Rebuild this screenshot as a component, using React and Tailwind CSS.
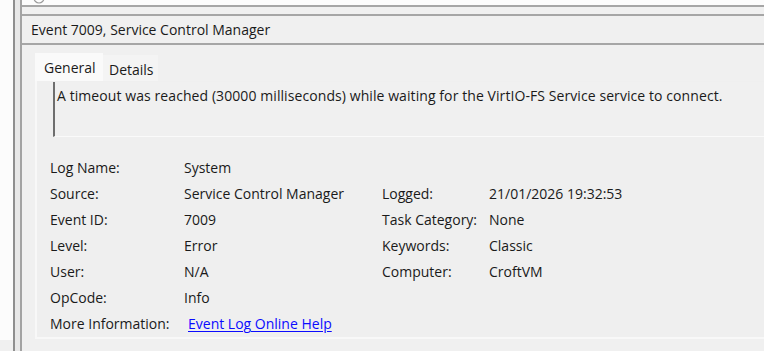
const rows = [
  ["Log Name:", "System", "", ""],
  ["Source:", "Service Control Manager", "Logged:", "21/01/2026 19:32:53"],
  ["Event ID:", "7009", "Task Category:", "None"],
  ["Level:", "Error", "Keywords:", "Classic"],
  ["User:", "N/A", "Computer:", "CroftVM"],
  ["OpCode:", "Info", "", ""],
];

function Cell({ children }) {
  return <div className="h-[26px] leading-[26px] whitespace-nowrap">{children}</div>;
}

export default function App() {
  return (
    <div className="w-[764px] h-[351px] overflow-hidden flex bg-[#f0f0f0] text-[14px] text-[#1a1a1a] font-['Open_Sans',sans-serif]">
      {/* left edge of the list pane */}
      <div className="w-[13px] flex flex-col">
        <div className="flex-1 bg-[#fcfcfc]" />
        <div className="h-[11px] bg-[#f0f0f0]" />
      </div>
      <div className="w-[2px] bg-[#8f8f8f]" />
      <div className="w-[5px] bg-[#e8e8e8]" />
      <div className="w-[2px] bg-[#a3a3a3]" />

      <div className="flex-1 min-w-0 flex flex-col">
        {/* bottom of the event list */}
        <div className="h-[5px] bg-[#fcfcfc] relative">
          <svg className="absolute left-[11px] -top-[8px]" width="12" height="12" viewBox="0 0 12 12">
            <circle cx="6" cy="6" r="5" fill="none" stroke="#9a9a9a" strokeWidth="1.2" />
          </svg>
        </div>
        <div className="h-[2px] bg-[#a6a6a6]" />
        <div className="h-[7px]" />
        <div className="h-[2px] bg-[#a6a6a6]" />

        <div className="h-[27px] leading-[27px] pl-[9px] whitespace-nowrap">
          Event 7009, Service Control Manager
        </div>
        <div className="h-[2px] bg-[#a6a6a6]" />

        {/* tabs */}
        <div className="flex items-end h-[36px] pl-[13px] pt-[8px]">
          <div className="h-[28px] w-[68px] bg-[#fafafa] pl-[9px] pt-[5px] leading-[20px]">General</div>
          <div className="h-[26px] w-[55px] bg-[#f4f4f4] pl-[6px] pt-[5px] leading-[20px]">Details</div>
        </div>

        {/* tab page */}
        <div className="h-[258px] ml-[13px] border-l-2 border-b-2 border-[#f8f8f8] bg-[#efefef] flex flex-col">
          <div className="mt-[1px] ml-[16px] h-[56px] border-l-2 border-[#6e6e6e] border-b border-b-[#fafafa] bg-[#f0f0f0] pl-[2px] pt-[4px] leading-[20px] tracking-[0.08px] whitespace-nowrap">
            A timeout was reached (30000 milliseconds) while waiting for the VirtIO-FS Service service to connect.
          </div>

          <div className="mt-[18px] ml-[13px] grid grid-cols-[134px_198px_107px_1fr]">
            {rows.map((r, i) =>
              r.map((c, j) => <Cell key={i + "-" + j}>{c}</Cell>)
            )}
            <Cell>More Information:</Cell>
            <div className="col-span-3 h-[26px] leading-[26px] pl-[4px]">
              <span className="text-[#0b0bff] underline underline-offset-2">Event Log Online Help</span>
            </div>
          </div>
        </div>
      </div>
    </div>
  );
}
